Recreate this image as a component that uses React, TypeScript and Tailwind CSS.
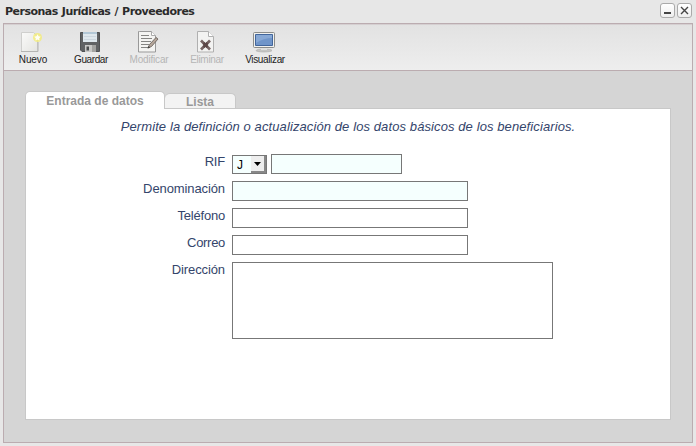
import type { ReactNode } from "react";

function NewIcon() {
  return (
    <svg width="24" height="24" viewBox="0 0 24 24">
      <defs>
        <linearGradient id="paper" x1="0" y1="0" x2="1" y2="1">
          <stop offset="0" stopColor="#fafaf9" />
          <stop offset="1" stopColor="#e4e4e1" />
        </linearGradient>
      </defs>
      <path d="M1.500 1.500h12l4 4v15h-16z" fill="url(#paper)" stroke="#cfcfcd" />
      <path d="M1 20.500h17V11" fill="none" stroke="#b4b4b2" />
      <circle cx="17.500" cy="6.500" r="4.500" fill="#f4ec75" opacity=".8" />
      <path d="M17.500 3.200l1.100 2.100 2.200.4-1.600 1.600.3 2.300-2-1-2 1 .3-2.300-1.600-1.600 2.200-.4z" fill="#fffff4" />
    </svg>
  );
}

function SaveIcon() {
  return (
    <svg width="24" height="24" viewBox="0 0 24 24">
      <path d="M2.500 1.500h19v19H4L2.500 19z" fill="#606264" stroke="#505254" />
      <path d="M5 1h14v10H5z" fill="#dfe8ee" />
      <path d="M5 1h14v2H5z" fill="#b3c8d7" />
      <path d="M6 5.500h12M6 8.500h12" stroke="#cdd7df" />
      <path d="M7 14h11v7H7z" fill="#c8c8c6" />
      <path d="M8.500 15.500H11v4H8.500z" fill="#4a4c4e" />
      <path d="M14 14h4v7h-4z" fill="#a2a2a0" />
    </svg>
  );
}

function EditIcon() {
  return (
    <svg width="24" height="24" viewBox="0 0 24 24">
      <path d="M3.500 .5h12l4 4v16.500h-17V.5z" fill="#f4f4f2" stroke="#999" />
      <path d="M15.500 .5v4h4" fill="#fff" stroke="#aaa" />
      <path d="M5 4.500h8M5 7.500h11M5 10.500h10M5 13.500h8M5 16.500h7" stroke="#858583" />
      <path d="M12 17l1.500-3.500L20 6.500l2 1.500-6.500 7.500z" fill="#b5a69a" stroke="#6d6560" strokeWidth=".9" />
      <path d="M11.500 17.500l1-2.500 1.700 1.500z" fill="#444" />
    </svg>
  );
}

function DeleteIcon() {
  return (
    <svg width="24" height="24" viewBox="0 0 24 24">
      <path d="M3.500 .5h11l5 5v15.500h-16z" fill="#f3f3f2" stroke="#b0b0b0" />
      <path d="M14.500 .5v5h5" fill="#fff" stroke="#b0b0b0" />
      <path d="M7 9.500l9 9M16 9.500l-9 9" stroke="#776464" strokeWidth="2.700" />
      <path d="M9.500 12l4 4M13.500 12l-4 4" stroke="#5d4747" strokeWidth="2.500" />
    </svg>
  );
}

function MonitorIcon() {
  return (
    <svg width="24" height="24" viewBox="0 0 24 24">
      <ellipse cx="12" cy="19.500" rx="8" ry="1.500" fill="#c5c5c3" stroke="#a0a09e" strokeWidth=".5" />
      <path d="M9 16h6v3H9z" fill="#e0e0de" />
      <rect x="1.500" y="1.500" width="21" height="15" rx="1" fill="#f1f1ee" stroke="#8b8c8a" />
      <path d="M3.500 3.500h17v11h-17z" fill="#7095c9" stroke="#42669c" />
      <path d="M4 4h16v3Q12 7 4 12z" fill="#87a8d5" />
    </svg>
  );
}

function Tool({ icon, label, spacing, disabled }: { icon: ReactNode; label: string; spacing: string; disabled?: boolean }) {
  return (
    <button className={`flex w-[58px] flex-col items-center text-[10px] leading-3 ${disabled ? "text-[#b5b5b5]" : "text-[#222]"}`}>
      <span className="mr-[2px]">{icon}</span>
      <span className={`-mt-px whitespace-nowrap ${spacing}`}>{label}</span>
    </button>
  );
}

function WindowButton({ children }: { children: ReactNode }) {
  return (
    <button className="flex size-[15px] items-center justify-center rounded-[3px] border border-[#aaa] bg-linear-to-b from-white to-[#eee]">
      {children}
    </button>
  );
}

function Row({ label, spacing, children }: { label: string; spacing: string; children: ReactNode }) {
  return (
    <div className="flex items-start gap-[7px]">
      <label className={`w-[199px] text-right text-[13px] leading-4 text-[#34456b] ${spacing}`}>{label}</label>
      {children}
    </div>
  );
}

export default function App() {
  return (
    <div className="flex h-[446px] w-[696px] flex-col bg-[#e7e7e7] font-['Liberation_Sans',Arial,sans-serif]">
      <header className="flex h-[23px] shrink-0 items-start justify-between pr-1 pl-[5px]">
        <h1 className="pt-1 font-['DejaVu_Sans',sans-serif] text-[11px] leading-4 font-bold tracking-[-0.52px] text-[#2b2b2b] [word-spacing:0.8px]">Personas Jurídicas / Proveedores</h1>
        <div className="flex gap-[2px] pt-[3px]">
          <WindowButton><span className="mt-[4px] h-[2px] w-[7px] bg-[#444]" /></WindowButton>
          <WindowButton>
            <svg width="9" height="9" viewBox="0 0 9 9"><path d="M1 1l7 7M8 1l-7 7" stroke="#444" strokeWidth="1.400" /></svg>
          </WindowButton>
        </div>
      </header>
      <main className="mr-[3px] ml-[3px] flex h-[420px] flex-col border border-[#bbacb0] bg-[#d5d5d5]">
        <nav className="flex h-[47px] shrink-0 border-t border-b border-t-[#d5cfd1] border-b-[#bbacb0] bg-linear-to-b from-[#e2e2e2] to-[#eeeeee] pt-[6px]">
          <Tool icon={<NewIcon />} label="Nuevo" spacing="tracking-[-0.1px]" />
          <Tool icon={<SaveIcon />} label="Guardar" spacing="tracking-[-0.4px]" />
          <Tool icon={<EditIcon />} label="Modificar" spacing="tracking-[-0.2px]" disabled />
          <Tool icon={<DeleteIcon />} label="Eliminar" spacing="tracking-[-0.3px]" disabled />
          <Tool icon={<MonitorIcon />} label="Visualizar" spacing="tracking-[-0.35px]" />
        </nav>
        <div className="px-[21px] pt-5">
          <div className="flex h-[17px] items-end text-xs leading-4 font-bold text-[#999]">
            <div className="relative -mb-px h-[18px] w-[140px] rounded-t-[5px] border border-b-0 border-[#c8c8c8] bg-white pt-px text-center">Entrada de datos</div>
            <div className="h-[15px] w-[71px] rounded-t-[5px] border border-b-0 border-l-0 border-[#c8c8c8] bg-[#f3f3f3] text-center">Lista</div>
          </div>
          <section className="h-[312px] w-[646px] border border-[#c8c8c8] bg-white pt-[10px]">
            <p className="text-center text-[13px] leading-4 tracking-[0.1px] text-[#34456b] italic">Permite la definición o actualización de los datos básicos de los beneficiarios.</p>
            <form className="mt-[19px] flex flex-col gap-[7px]">
              <Row label="RIF" spacing="tracking-[-0.2px]">
                <div className="flex h-5 items-end gap-1">
                  <div className="flex h-[19px] w-[35px] items-center justify-between border border-[#777] bg-[#f5fffe] pl-1 text-xs leading-4 text-black">
                    J
                    <span className="flex h-full w-[15px] items-center justify-center border-r-2 border-b-2 border-[#888] bg-[#eee]">
                      <svg width="7" height="4" viewBox="0 0 7 4"><path d="M0 0h7L3.500 4z" /></svg>
                    </span>
                  </div>
                  <input className="h-5 w-[131px] border border-[#777] bg-[#f5fffe]" />
                </div>
              </Row>
              <Row label="Denominación" spacing="tracking-[-0.1px]"><input className="h-5 w-[236px] border border-[#777] bg-[#f5fffe]" /></Row>
              <Row label="Teléfono" spacing="tracking-[-0.2px]"><input className="h-5 w-[236px] border border-[#777] bg-white" /></Row>
              <Row label="Correo" spacing="tracking-[-0.3px]"><input className="h-5 w-[236px] border border-[#777] bg-white" /></Row>
              <Row label="Dirección" spacing="tracking-[-0.1px]"><textarea className="h-[77px] w-[321px] resize-none border border-[#777] bg-white" /></Row>
            </form>
          </section>
        </div>
      </main>
    </div>
  );
}
